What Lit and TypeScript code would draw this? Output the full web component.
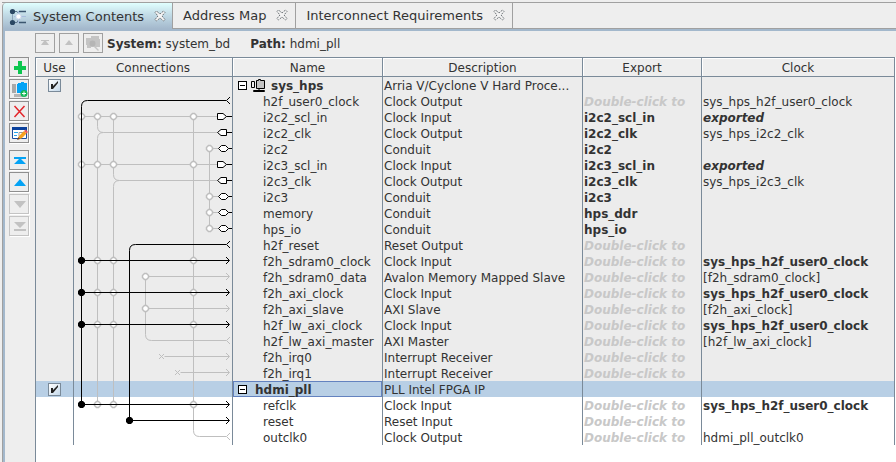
import { LitElement, html, svg, css, nothing } from "lit";
import { customElement, state } from "lit/decorators.js";
import { classMap } from "lit/directives/class-map.js";

interface Row {
  name: string;
  desc: string;
  exp?: string;
  clock?: string;
  clockStyle?: "bold" | "exported";
  module?: boolean;
  icon?: boolean;
  selected?: boolean;
}

const ROWS: Row[] = [
  { name: "sys_hps", desc: "Arria V/Cyclone V Hard Proce...", module: true, icon: true },
  { name: "h2f_user0_clock", desc: "Clock Output", clock: "sys_hps_h2f_user0_clock" },
  { name: "i2c2_scl_in", desc: "Clock Input", exp: "i2c2_scl_in", clock: "exported", clockStyle: "exported" },
  { name: "i2c2_clk", desc: "Clock Output", exp: "i2c2_clk", clock: "sys_hps_i2c2_clk" },
  { name: "i2c2", desc: "Conduit", exp: "i2c2" },
  { name: "i2c3_scl_in", desc: "Clock Input", exp: "i2c3_scl_in", clock: "exported", clockStyle: "exported" },
  { name: "i2c3_clk", desc: "Clock Output", exp: "i2c3_clk", clock: "sys_hps_i2c3_clk" },
  { name: "i2c3", desc: "Conduit", exp: "i2c3" },
  { name: "memory", desc: "Conduit", exp: "hps_ddr" },
  { name: "hps_io", desc: "Conduit", exp: "hps_io" },
  { name: "h2f_reset", desc: "Reset Output" },
  { name: "f2h_sdram0_clock", desc: "Clock Input", clock: "sys_hps_h2f_user0_clock", clockStyle: "bold" },
  { name: "f2h_sdram0_data", desc: "Avalon Memory Mapped Slave", clock: "[f2h_sdram0_clock]" },
  { name: "f2h_axi_clock", desc: "Clock Input", clock: "sys_hps_h2f_user0_clock", clockStyle: "bold" },
  { name: "f2h_axi_slave", desc: "AXI Slave", clock: "[f2h_axi_clock]" },
  { name: "h2f_lw_axi_clock", desc: "Clock Input", clock: "sys_hps_h2f_user0_clock", clockStyle: "bold" },
  { name: "h2f_lw_axi_master", desc: "AXI Master", clock: "[h2f_lw_axi_clock]" },
  { name: "f2h_irq0", desc: "Interrupt Receiver" },
  { name: "f2h_irq1", desc: "Interrupt Receiver" },
  { name: "hdmi_pll", desc: "PLL Intel FPGA IP", module: true, selected: true },
  { name: "refclk", desc: "Clock Input", clock: "sys_hps_h2f_user0_clock", clockStyle: "bold" },
  { name: "reset", desc: "Reset Input" },
  { name: "outclk0", desc: "Clock Output", clock: "hdmi_pll_outclk0" },
];

const SELECTED = ROWS.findIndex((r) => r.selected);
const ROW_H = 16;
/** Vertical centre of a row in the connection graph. */
const mid = (row: number) => row * ROW_H + 7.5;
/** Horizontal centre of a vertical rail. */
const rail = (n: number) => 7.5 + n * 16;

const node = (n: number, row: number) => svg`
  <path class="node" d="M${rail(n) - 1} ${mid(row) - 3}h2l2 2v2l-2 2h-2l-2-2v-2z"></path>`;
const dot = (n: number, row: number) => svg`
  <path class="dot" d="M${rail(n) - 1.5} ${mid(row) - 3.5}h3l2 2v3l-2 2h-3l-2-2v-3z"></path>`;
const arrow = (row: number, cls: string) => svg`
  <path class=${cls} d="M152 ${mid(row) - 3.5}l3.5 3.5l-3.5 3.5"></path>`;
const fork = (row: number, cls: string) => svg`
  <path class=${cls} d="M156 ${mid(row) - 3.5}l-3.5 3.5l3.5 3.5"></path>`;
const inPort = (row: number) => svg`
  <path class="port" d="M143.5 ${mid(row) - 3}h5.5l3.5 3l-3.5 3h-5.5zM152.5 ${mid(row)}H159"></path>`;
const outPort = (row: number) => svg`
  <path class="port" d="M152.5 ${mid(row) - 3}h-5.5l-3.5 3l3.5 3h5.5zM152.5 ${mid(row)}H159"></path>`;
const conduit = (row: number) => svg`
  <path class="port" d="M144.5 ${mid(row)}l3-3h4l3 3l-3 3h-4zM154.5 ${mid(row)}H159"></path>`;
const cross = (n: number, row: number) => svg`
  <path class="thin" d="M${rail(n) - 2.5} ${mid(row) - 2.5}l5 5m0 -5l-5 5"></path>
  <path class="grey" d="M${rail(n) + 3} ${mid(row)}H155"></path>`;

const connections = () => svg`
  <rect class="zone-on" x="0" y="0" width="159" height=${SELECTED * ROW_H}></rect>
  <rect class="zone-sel" x="0" y=${SELECTED * ROW_H} width="159" height="16"></rect>
  <rect class="zone-off" x="0" y=${(SELECTED + 1) * ROW_H} width="159" height="48"></rect>
  ${[2, 5].map((r) => svg`<path class="grey" d="M${rail(0)} ${mid(r)}H143"></path>`)}
  ${[[1, 3], [2, 6]].map(([n, r]) => svg`
    <path class="grey" d="M${rail(n)} ${mid(2)}V${mid(r) - 6}q0 6 6 6H143M${rail(n) + 6} ${mid(r)}q-6 0 -6 6V${mid(20)}"></path>`)}
  <path class="grey" d="M${rail(7)} ${mid(2)}V${mid(22) - 6}q0 6 6 6H152"></path>
  <path class="grey" d="M${rail(8)} ${mid(4)}V${mid(9)}"></path>
  ${[4, 7, 8, 9].map((r) => svg`<path class="grey" d="M${rail(8)} ${mid(r)}H144"></path>`)}
  <path class="grey" d="M${rail(4)} ${mid(12)}V${mid(16) - 6}q0 6 6 6H152"></path>
  ${[12, 14].map((r) => svg`<path class="grey" d="M${rail(4)} ${mid(r)}H155"></path>`)}
  ${cross(5, 17)}${cross(6, 18)}
  ${[2, 5].map((r) => node(0, r))}
  ${[1, 2, 7].map((n) => [2, 5, 11, 13, 15, 20].map((r) => node(n, r)))}
  ${[4, 7, 8, 9].map((r) => node(8, r))}
  ${[12, 14].map((r) => node(4, r))}
  ${[12, 14, 17, 18].map((r) => arrow(r, "thin"))}
  ${[16, 22].map((r) => fork(r, "thin"))}
  <path class="wire" d="M152 ${mid(1)}H${rail(0) + 6}q-6 0 -6 6V${mid(20)}"></path>
  <path class="wire" d="M152 ${mid(10)}H${rail(3) + 6}q-6 0 -6 6V${mid(21)}H155"></path>
  ${[11, 13, 15, 20].map((r) => svg`<path class="wire" d="M${rail(0)} ${mid(r)}H155"></path>${dot(0, r)}`)}
  ${dot(3, 21)}
  ${[11, 13, 15, 20, 21].map((r) => arrow(r, "wire"))}
  ${[1, 10].map((r) => fork(r, "wire"))}
  ${[2, 5].map(inPort)}${[3, 6].map(outPort)}${[4, 7, 8, 9].map(conduit)}`;

const closeIcon = html`<svg width="12" height="12" viewBox="0 0 12 12" aria-hidden="true">
  <path d="M1 2.5L2.5 1L6 4L9.5 1L11 2.5L8 6L11 9.5L9.5 11L6 8L2.5 11L1 9.5L4 6Z" fill="#f4f4f4" stroke="#6c7276" stroke-dasharray="2 1"/></svg>`;

const systemIcon = html`<svg width="18" height="18" viewBox="0 0 18 18" aria-hidden="true">
  <path d="M3.5 3V14" stroke="#8ea5bb"/>
  <path d="M4 3.5H8L10 6M4 14.5H8L10 11" fill="none" stroke="#5f7890"/>
  <path d="M10 3.5H17M10 14.5H17" stroke="#3b566f" stroke-width="1.5"/>
  <path d="M5 8.5H17M9.5 3V15" stroke="#a9bdde"/>
  <circle cx="9.5" cy="8.5" r="2.5" fill="#fff" stroke="#d5dcf0"/>
  <circle cx="3.5" cy="3.5" r="2.6" fill="#2b4763"/><circle cx="3.5" cy="14.5" r="2.6" fill="#2b4763"/></svg>`;

const ICONS = {
  add: svg`<path d="M9 4h4v5h4v4h-4v4H9v-4H5V9h4z" fill="#0cc64e"/>`,
  addInst: svg`<path d="M3 5h4v9H3z" fill="#a9a9a9"/><path d="M5 15h9v3H5z" fill="#b5b5b5"/>
    <path d="M9 4h3V3h3v1h3v10H8V5h1z" fill="#04a3f5"/>
    <circle cx="15" cy="14.5" r="3.5" fill="#14b856"/><path d="M15 12.500v4M13 14.500h4" stroke="#fff"/>`,
  remove: svg`<path d="M5.5 5l10 11M15.5 5l-10 11" stroke="#e3262b" stroke-width="1.5" fill="none"/>`,
  edit: svg`<path d="M3.5 4.5h14v11h-14z" fill="#fff" stroke="#1c4e9c"/><path d="M3 4h15v3H3z" fill="#0a419c"/>
    <path d="M5 9.5h4M5 12.5h3" stroke="#27a5ea"/><path d="M10 9.5h4v4h-4z" stroke="#9a9a9a" fill="none"/>
    <path d="M9 16l1-3 5-5 2.5 2.5-5 5z" fill="#f7a11d"/><path d="M15 8l1.5-1.5 2.5 2.5-1.5 1.5z" fill="#ef5a5a"/><path d="M8 17l1.5-3 1.5 2z" fill="#70401c"/>`,
  top: svg`<path d="M5 7h12v2h-5l5 5H5l5-5H5z"/>`,
  up: svg`<path d="M11 7l6 7H5z"/>`,
  down: svg`<path d="M5 7h12l-6 7z"/>`,
  bottom: svg`<path d="M5 6h12l-6 6zM5 13h12v2H5z"/>`,
  navTop: svg`<path d="M6 7h8v1h-3l3 4H6l3-4H6z"/>`,
  navUp: svg`<path d="M10 7l4 5H6z"/>`,
  find: svg`<path d="M3 5h5V3h8v3h1v8h-4l3 3-1 1-4-4H8v1H4v-3H3z" fill="#c4c4c4"/><circle cx="9.5" cy="10.5" r="3" fill="#b5b5b5"/>`,
};

@customElement("app-root")
export class AppRoot extends LitElement {
  @state() private tab = 0;

  static styles = css`
    :host {
      display: flex;
      flex-direction: column;
      box-sizing: border-box;
      min-height: 100vh;
      padding: 2px 0 0 2px;
      background: #eeeeee;
      color: #333333;
      font: 12px/14px "DejaVu Sans", sans-serif;
      white-space: nowrap;
    }
    button {
      font: inherit;
      color: inherit;
      margin: 0;
      padding: 0;
      background: none;
      border: 0;
    }
    svg { display: block; flex: none; }
    .tabs {
      display: flex;
      height: 25px;
      border-top: 1px solid #a0a0a0;
      border-bottom: 1px solid #a0a0a0;
      font-size: 13px;
      line-height: 16px;
    }
    .tab {
      display: flex;
      align-items: center;
      gap: 10px;
      padding: 0 7px 0 10px;
      border-right: 1px solid #a0a0a0;
    }
    .tab.on {
      border-left: 1px solid #a0a0a0;
      border-radius: 4px 0 0 0;
      padding: 0 6px;
      margin-bottom: -1px;
      background: linear-gradient(#e0ffff, #c2dbe6 45%, #a3b8cc);
    }
    .label { display: flex; align-items: center; gap: 6px; padding-top: 1px; }
    .close { padding-bottom: 1px; }
    .panel {
      flex: 1;
      display: flex;
      flex-direction: column;
      border-top: 2px solid #a3b8cc;
      border-left: 2px solid #a3b8cc;
      box-shadow: -1px 0 #a0a0a0;
      margin-left: 1px;
    }
    .bar {
      display: flex;
      align-items: center;
      gap: 4px;
      height: 24px;
      padding: 0 0 2px 30px;
    }
    .bar p { margin: 0 16px 0 0; padding-top: 2px; }
    .tool {
      display: block;
      box-sizing: border-box;
      width: 20px;
      height: 20px;
      border: 1px solid #8f8f8f;
      box-shadow: 1px 1px #ffffff;
      fill: #04a3f5;
    }
    .tool svg { margin: -1px; }
    .tool:disabled { fill: #c2c2c2; border-color: #c4c4c4; }
    .bar .tool:disabled { border-color: #a0a0a0; box-shadow: none; }
    .body { flex: 1; display: flex; }
    .side {
      display: flex;
      flex-direction: column;
      gap: 2px;
      padding: 0 6px 0 4px;
    }
    .gap { margin-top: 5px; }
    .sheet {
      flex: 1;
      min-width: 0;
      background: #ffffff;
      border-left: 1px solid #7a8a99;
      padding-right: 1px;
    }
    table {
      width: 100%;
      table-layout: fixed;
      border-collapse: separate;
      border-spacing: 0;
    }
    .c-use { width: 38px; }
    .c-conn { width: 159px; }
    .c-name { width: 150px; }
    .c-desc { width: 200px; }
    .c-exp { width: 119px; }
    th {
      box-sizing: border-box;
      height: 20px;
      padding: 2px 0 0;
      font-weight: normal;
      background: #eeeeee;
      border: solid #7a8a99;
      border-width: 1px 1px 1px 0;
      box-shadow: inset 1px 1px #ffffff;
    }
    td {
      box-sizing: border-box;
      height: 16px;
      padding: 2px 0 0 1px;
      border-right: 1px solid #7a8a99;
      overflow: hidden;
      text-overflow: ellipsis;
    }
    tr.on td { background: #ececec; }
    tr.sel td { background: #b8cfe5; }
    td.graph { padding: 0; vertical-align: top; }
    td.use { padding: 0 0 0 12px; }
    td.name { padding-left: 30px; }
    td.module { padding: 0 0 0 5px; font-weight: bold; }
    tr.sel td.name { box-shadow: inset 0 0 0 1px #6382bf; }
    .mod { display: flex; align-items: center; gap: 4px; height: 16px; }
    .mod b { padding: 2px 0 0 1px; }
    tr.sel .mod b { padding-left: 4px; }
    .fold {
      box-sizing: border-box;
      width: 9px;
      height: 9px;
      border: 1px solid #000000;
      background: linear-gradient(#000000, #000000) center / 5px 1px no-repeat #ffffff;
    }
    input {
      appearance: none;
      display: block;
      box-sizing: border-box;
      width: 13px;
      height: 13px;
      margin: 1px 0 0 0;
      border: 1px solid #7a8a99;
      background: linear-gradient(135deg, #ffffff, #c4d8ea);
    }
    input:checked::before {
      content: "";
      display: block;
      width: 11px;
      height: 11px;
      background: #222222;
      clip-path: polygon(2px 4px, 4px 4px, 4px 6px, 9px 1px, 9px 3px, 4px 9px, 2px 9px);
    }
    .export { font-weight: bold; }
    .hint { font-weight: bold; font-style: italic; color: #c8c8c8; }
    .bold { font-weight: bold; }
    .exported { font-weight: bold; font-style: italic; }
    .grey, .thin, .wire, .port, .node { fill: none; stroke: #bfbfbf; stroke-width: 1px; }
    .wire { stroke: #000000; }
    .node { fill: #ffffff; stroke-width: 1.5px; }
    .port { fill: #ffffff; stroke: #000000; }
    .dot { fill: #000000; }
    .zone-on { fill: #ececec; }
    .zone-sel { fill: #b8cfe5; }
    .zone-off { fill: #ffffff; }
  `;

  private tool(icon: keyof typeof ICONS, label: string, disabled = false, gap = false) {
    return html`<button class=${classMap({ tool: true, gap })} aria-label=${label} ?disabled=${disabled}>
      <svg width="20" height="20" viewBox="0 0 20 20">${ICONS[icon]}</svg>
    </button>`;
  }

  private row(r: Row, i: number) {
    return html`<tr class=${classMap({ on: i < SELECTED, sel: !!r.selected })}>
      <td class="use">${r.module ? html`<input type="checkbox" checked aria-label="Use ${r.name}" />` : nothing}</td>
      ${i === 0
        ? html`<td class="graph" rowspan=${ROWS.length}>
            <svg width="158" height=${ROWS.length * ROW_H} role="img" aria-label="Connections">${connections()}</svg>
          </td>`
        : nothing}
      <td class=${classMap({ name: true, module: !!r.module })}>
        ${r.module
          ? html`<div class="mod">
              <button class="fold" aria-label="Collapse ${r.name}"></button>
              ${r.icon
                ? html`<svg width="15" height="15" viewBox="0 0 15 15" aria-hidden="true">
                    <path d="M.5 3.5h3v6h-3z" fill="#eee" stroke="#000"/>
                    <path d="M5.5 2.5h2v-1h2v1h4v8h-8z" fill="#c4c4c4" stroke="#000"/>
                    <path d="M8 11v1M2.5 12.5h11v1h-11z" fill="#eee" stroke="#000"/>
                  </svg>`
                : nothing}
              <b>${r.name}</b>
            </div>`
          : r.name}
      </td>
      <td>${r.desc}</td>
      <td class=${r.exp ? "export" : "hint"}>${r.exp ?? (r.module ? "" : "Double-click to")}</td>
      <td class=${r.clockStyle ?? ""}>${r.clock ?? ""}</td>
    </tr>`;
  }

  render() {
    const tabs = ["System Contents", "Address Map", "Interconnect Requirements"];
    return html`
      <nav class="tabs" role="tablist">
        ${tabs.map(
          (t, i) => html`<div class=${classMap({ tab: true, on: i === this.tab })}>
            <button class="label" role="tab" aria-selected=${i === this.tab} @click=${() => (this.tab = i)}>
              ${i === 0 ? systemIcon : nothing}${t}
            </button>
            <button class="close" aria-label="Close ${t}">${closeIcon}</button>
          </div>`
        )}
      </nav>
      <main class="panel">
        <div class="bar">
          ${this.tool("navTop", "Top of hierarchy", true)}
          ${this.tool("navUp", "Up one level", true)}
          ${this.tool("find", "Drill into", true)}
          <p><b>System:</b> system_bd</p>
          <p><b>Path:</b> hdmi_pll</p>
        </div>
        <div class="body">
          <div class="side">
            ${this.tool("add", "Add")}
            ${this.tool("addInst", "Add instance")}
            ${this.tool("remove", "Remove")}
            ${this.tool("edit", "Edit")}
            ${this.tool("top", "Move to top", false, true)}
            ${this.tool("up", "Move up")}
            ${this.tool("down", "Move down", true)}
            ${this.tool("bottom", "Move to bottom", true)}
          </div>
          <div class="sheet">
            <table>
              <colgroup>
                <col class="c-use" /><col class="c-conn" /><col class="c-name" />
                <col class="c-desc" /><col class="c-exp" /><col />
              </colgroup>
              <thead>
                <tr><th>Use</th><th>Connections</th><th>Name</th><th>Description</th><th>Export</th><th>Clock</th></tr>
              </thead>
              <tbody>${ROWS.map((r, i) => this.row(r, i))}</tbody>
            </table>
          </div>
        </div>
      </main>
    `;
  }
}
